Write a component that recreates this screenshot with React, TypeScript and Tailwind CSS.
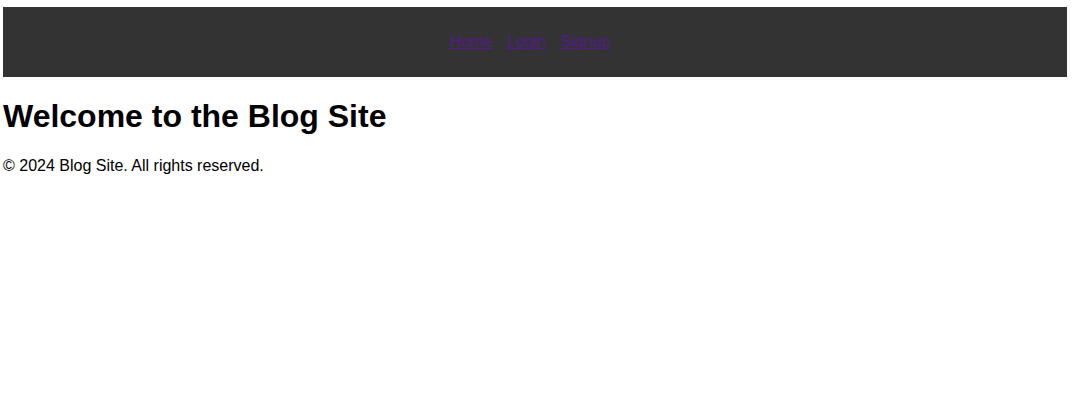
export default function App() {
  return (
    <div className="min-h-screen bg-white pt-[7px] pl-[3px] pr-[7px] font-['Liberation_Sans',Arial,sans-serif] text-black">
      {/* Header */}
      <header className="bg-[#333333] py-[26px] text-center text-[16px] leading-[18px]">
        <nav>
          <a href="#" className="mr-[10px] text-[#551a8b] underline">Home</a>{' '}
          <a href="#" className="mr-[10px] text-[#551a8b] underline">Login</a>{' '}
          <a href="#" className="mr-[10px] text-[#551a8b] underline">Signup</a>
        </nav>
      </header>

      <main>
        <h1 className="mt-[21px] mb-[22px] text-[32px] font-bold leading-[37px]">Welcome to the Blog Site</h1>
      </main>

      <footer>
        <p className="text-[16px] leading-[18px]">© 2024 Blog Site. All rights reserved.</p>
      </footer>
    </div>
  );
}
